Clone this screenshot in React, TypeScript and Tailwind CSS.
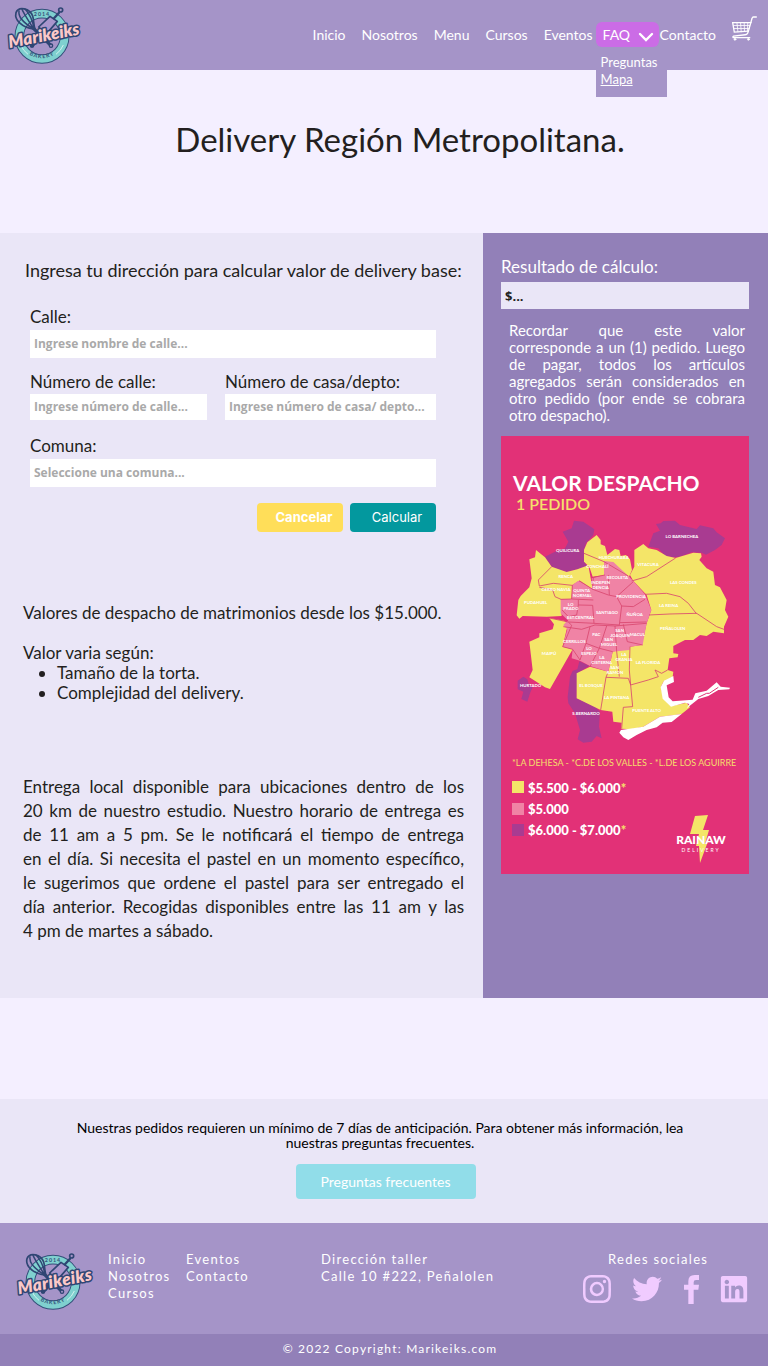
import React from "react";
import { BsInstagram } from "react-icons/bs";
import { FaLinkedin, FaTwitter } from "react-icons/fa";

function Logo() {
  return (
    <svg viewBox="12 12 240 180" className="h-[60px] w-20 shrink-0" role="img" aria-label="Marikeiks Bakery">
      <circle cx="126" cy="106" r="68" fill="none" stroke="#34507a" strokeWidth="29" />
      <circle cx="126" cy="106" r="68" fill="none" stroke="#7fd0cf" strokeWidth="23" />
      <path d="M62 132 A69 69 0 0 0 84 160 M190 132 A69 69 0 0 1 168 160" fill="none" stroke="#e6f8f5" strokeWidth="2.5" />
      <text x="126" y="44" textAnchor="middle" fontFamily="Lato" fontSize="16" fontWeight="700" letterSpacing="3" fill="#34507a">2014</text>
      <path id="logo-bottom" d="M72 148 A74 74 0 0 0 180 148" fill="none" />
      <text fontFamily="Lato" fontSize="16" fontWeight="700" letterSpacing="3" fill="#34507a" textAnchor="middle">
        <textPath href="#logo-bottom" startOffset="50%">BAKERY</textPath>
      </text>
      <g stroke="#2f4674" fill="none" strokeLinecap="round" strokeLinejoin="round">
        <path d="M98 80 L153 134" strokeWidth="10" />
        <path d="M100 84 C68 80 42 58 48 35 C56 14 90 22 98 45 C102 58 100 70 105 84" strokeWidth="5" />
        <path d="M98 82 C75 68 54 48 57 30 M100 82 C86 60 71 38 66 25 M102 82 C98 60 88 38 76 25" strokeWidth="4.5" />
        <path d="M96 134 L135 90" strokeWidth="11" />
        <path d="M133 95 L116 78 L150 46 L172 61 L140 98Z" fill="#a996cd" strokeWidth="5" />
        <path d="M162 52 L177 35" strokeWidth="7" />
        <circle cx="182" cy="27" r="6" strokeWidth="5" />
        <circle cx="153" cy="134" r="5" fill="#a493c8" strokeWidth="4" />
        <circle cx="96" cy="134" r="4" strokeWidth="5" />
      </g>
      <text x="131" y="121" transform="rotate(-11 130 102)" textAnchor="middle" fontFamily="Lato" fontSize="51" fontWeight="800" fontStyle="italic" fill="#fbc8c8" stroke="#2f4674" strokeWidth="9" strokeLinejoin="round" paintOrder="stroke">Marikeiks</text>
    </svg>
  );
}

function Cart() {
  return (
    <svg viewBox="0 0 76 76" className="h-[25px] w-[25px]" fill="none" stroke="#fff" strokeWidth="4" strokeLinecap="round">
      <path d="M74 3 H65 Q62 3 61 7 L49 49 Q47 57 40 57 L5 61 Q1 63 4 66 H54" />
      <path d="M58 20 H2 L7 49 L49 46" />
      <path d="M5 29 H54 M6 38 H52 M15 20 L18 48 M26 20 L28 48 M37 20 L38 47 M48 20 L47 46" strokeWidth="2.5" />
      <circle cx="9" cy="71" r="3" fill="#fff" strokeWidth="2" />
      <circle cx="50" cy="71" r="3" fill="#fff" strokeWidth="2" />
    </svg>
  );
}

const purpleAreas = [
  "M222 62 L250 65 L283 88 L280 105 L258 130 L252 150 L256 190 L262 200 L232 208 L200 216 L180 210 L155 200 L135 170 L165 155 L195 145 L205 125 L188 95 L215 85Z",
  "M468 72 L482 70 L490 63 L525 62 L540 75 L590 87 L600 76 L640 85 L650 97 L675 115 L665 135 L645 150 L618 164 L605 158 L575 157 L540 170 L520 172 L495 167 L475 145 L445 140 L460 100 L480 92Z",
  "M238 484 L268 497 L232 520 L230 595 L285 620 L300 635 L297 680 L305 715 L290 708 L275 725 L250 728 L233 718 L240 690 L225 640 L205 610 L203 590 L210 530 L218 512 L232 508Z",
  "M53 542 L70 530 L82 538 L86 552 L98 562 L90 580 L82 605 L64 597 L70 575 L53 568Z",
];

const yellowAreas = [
  "M108 150 L135 172 L155 200 L200 216 L232 208 L265 196 L278 268 L238 242 L217 255 L215 297 L183 298 L185 348 L140 350 L68 348 L58 356 L50 346 L55 300 L62 288 L88 262 L95 235 L88 178 L105 172Z",
  "M290 105 L302 120 L302 133 L315 138 L322 165 L345 147 L358 150 L362 168 L378 165 L390 178 L396 210 L385 235 L330 190 L315 225 L278 230 L268 200 L252 185 L252 150 L262 127Z",
  "M148 354 L192 362 L215 376 L212 388 L200 388 L188 440 L218 448 L150 567 L135 562 L88 532 L98 510 L88 425 L118 412 L118 400 L158 388 L162 373Z",
  "M430 132 L445 145 L470 150 L500 168 L527 174 L580 158 L603 160 L605 170 L598 180 L620 205 L640 215 L645 255 L660 262 L680 300 L675 330 L685 350 L672 380 L672 400 L640 395 L620 408 L600 405 L580 420 L555 420 L520 438 L520 460 L535 462 L533 472 L508 475 L503 510 L520 515 L518 530 L490 545 L483 560 L490 595 L515 618 L560 608 L570 622 L545 642 L525 645 L480 650 L430 680 L395 688 L363 686 L365 668 L340 665 L337 635 L302 630 L230 595 L230 520 L270 500 L325 515 L338 455 L390 440 L425 435 L440 370 L454 330 L440 285 L400 243 L390 225 L403 200 L403 150Z",
];

const borders =
  "M155 200 L115 240 L118 258 L160 250 L216 256 M118 262 L158 270 L165 290 L183 298 M252 160 L312 185 L385 228 M395 243 L440 230 L527 174 M435 283 L500 280 L540 290 L565 310 L590 342 M447 345 L510 342 L590 340 L650 380 L672 388 M238 242 L278 268 L280 232 L315 225 M278 268 L325 285 L350 290 L400 245 M182 298 L215 297 L217 255 M215 297 L280 300 M235 300 L235 315 L278 316 L282 370 L205 366 M325 225 L328 285 M350 290 L365 318 L358 375 L282 370 M365 318 L400 320 L435 298 M360 368 L440 366 M186 330 L205 350 L230 345 L235 315 M190 380 L245 388 L285 375 L345 378 L440 370 M270 380 L258 430 L240 480 M320 378 L298 445 L258 430 M345 378 L350 453 M370 373 L382 425 L428 435 M350 453 L358 530 M298 445 L338 455 M270 500 L298 445 M390 440 L388 510 L392 555 L445 540 L475 530 L465 510 L485 520 L503 510 M325 515 L318 532 L385 535 L392 555 L398 620 L370 622 L365 686 M318 532 L302 630 M148 354 L205 366 L215 376 L188 440 L218 448 L240 480";

const mapLabels: [string, number, number][] = [
  ["QUILICURA", 203, 157], ["LO BARNECHEA", 546, 115], ["HUECHURABA", 341, 176], ["VITACURA", 444, 198],
  ["CONCHALÍ", 292, 203], ["RENCA", 197, 234], ["RECOLETA", 352, 238], ["INDEPEN", 302, 252], ["DENCIA", 302, 267],
  ["CERRO NAVIA", 168, 273], ["QUINTA", 245, 275], ["NORMAL", 247, 290], ["LAS CONDES", 550, 253],
  ["PROVIDENCIA", 393, 293], ["PUDAHUEL", 107, 313], ["LO", 212, 317], ["PRADO", 213, 331], ["SANTIAGO", 321, 342],
  ["ÑUÑOA", 404, 348], ["LA REINA", 506, 321], ["EST.CENTRAL", 242, 357], ["PEÑALOLEN", 518, 390],
  ["PAC", 289, 408], ["SAN", 359, 396], ["JOAQUIN", 360, 410], ["MACUL", 412, 408], ["CERRILLOS", 223, 428],
  ["SAN", 326, 424], ["MIGUEL", 327, 438], ["LO", 267, 450], ["ESPEJO", 267, 464], ["MAIPÚ", 147, 466],
  ["LA", 306, 476], ["CISTERNA", 305, 491], ["LA", 372, 468], ["GRANJA", 372, 482], ["LA FLORIDA", 444, 491],
  ["SAN", 344, 506], ["RAMON", 345, 521], ["EL BOSQUE", 273, 561], ["HURTADO", 92, 561], ["LA PINTANA", 350, 598],
  ["PUENTE ALTO", 440, 635], ["S.BERNARDO", 258, 644],
];

function DeliveryPoster() {
  return (
    <svg viewBox="0 0 248 438" className="mt-3 block w-full" fontFamily="Lato, sans-serif" role="img" aria-label="Valor despacho por comuna">
      <rect width="248" height="438" fill="#e23177" />
      <text x="12" y="55" fontSize="21" fontWeight="700" fill="#fff">VALOR DESPACHO</text>
      <text x="15" y="74" fontSize="16" fontWeight="600" fill="#f5df6b">1 PEDIDO</text>
      <g transform="translate(-1 64) scale(0.3333)">
        {purpleAreas.map((d) => <path key={d} d={d} fill="#a93b91" />)}
        {yellowAreas.map((d) => <path key={d} d={d} fill="#f4e568" />)}
        <path
          d="M312 183 L340 186 L385 228 L400 243 L435 283 L454 330 L440 370 L428 435 L390 440 L388 450 L338 455 L325 515 L270 498 L240 482 L215 475 L218 448 L188 440 L202 388 L190 376 L198 366 L205 362 L182 340 L182 298 L215 297 L217 255 L235 242 L278 268 L275 235 L312 225Z"
          fill="#f083a5"
        />
        <path
          d="M520 528 L522 546 L500 556 L506 592 L518 604 L578 599 L586 580 L620 572 L650 547 L662 560 L690 563 L688 568 L655 570 L625 588 L595 597 L560 625 L568 612 L555 608 L513 620 L488 596 L482 562 L492 542Z M363 690 L430 680 L480 650 L545 642 L515 666 L488 668 L470 682 L440 690 L410 705 L385 720 L370 712 L358 698Z"
          fill="#fff"
        />
        <path d={borders} fill="none" stroke="#d9476f" strokeWidth="2.5" strokeLinejoin="round" />
        <path d="M595 592 L620 580 L628 580 L655 562" fill="none" stroke="#e23177" strokeWidth="3" />
        <g fontSize="13" fontWeight="700" fill="#fff" textAnchor="middle">
          {mapLabels.map(([name, x, y]) => <text key={name + x} x={x} y={y}>{name}</text>)}
        </g>
      </g>
      <text x="11" y="330" fontSize="9" fill="#f5df6b">*LA DEHESA - *C.DE LOS VALLES - *L.DE LOS AGUIRRE</text>
      <rect x="11" y="345" width="12" height="12" fill="#f4e568" />
      <rect x="11" y="367" width="12" height="12" fill="#f083a5" />
      <rect x="11" y="388" width="12" height="12" fill="#a93b91" />
      <g fontSize="13" fontWeight="900" fill="#fff">
        <text x="27" y="357">$5.500 - $6.000<tspan fill="#f5df6b">*</tspan></text>
        <text x="27" y="378">$5.000</text>
        <text x="27" y="399">$6.000 - $7.000<tspan fill="#f5df6b">*</tspan></text>
      </g>
      <path d="M194 380 L207 379 L202 394 H208 L204 408 H206 L199 427 L198 410 H195 L198 398 H189Z" fill="#f4e568" />
      <text x="200" y="408" textAnchor="middle" fontSize="12" fontWeight="900" fill="#fff">RAINAW</text>
      <text x="200" y="416" textAnchor="middle" fontSize="5" letterSpacing="2" fill="#fff">DELIVERY</text>
    </svg>
  );
}

const navLinks = ["Inicio", "Nosotros", "Menu", "Cursos", "Eventos"];
const field =
  "block w-full rounded-none bg-white px-1 font-['Open_Sans',sans-serif] text-xs font-bold text-[#a9a9a9] outline-none placeholder:text-[#a9a9a9] placeholder:opacity-100";

export default function App() {
  return (
    <div className="min-h-screen bg-[#f4efff] font-[Lato,sans-serif] text-[#231f20]">
      <header className="flex h-[70px] items-center bg-[#a594c8] pr-[11px] pb-px pl-1 text-white">
        <a href="#inicio"><Logo /></a>
        <nav className="ml-auto flex items-center text-sm">
          <div className="flex gap-4">
            {navLinks.map((l) => <a key={l} href={"#" + l.toLowerCase()}>{l}</a>)}
          </div>
          <div className="relative ml-[3px]">
            <button className="flex h-[25px] w-[63px] items-center justify-between rounded-md bg-[#cb6ce6] pr-[5px] pl-[7px]">
              FAQ
              <svg viewBox="0 0 16 10" className="mt-1 h-[10px] w-4" fill="none" stroke="#fff" strokeWidth="2.4" strokeLinecap="round">
                <path d="M2 2 L8 8 L14 2" />
              </svg>
            </button>
            <div className="absolute top-[25px] left-0 flex h-[50px] w-[71px] flex-col bg-[#a594c8] pt-[7px] pl-[5px] text-[13px] leading-[17px]">
              <a href="#preguntas">Preguntas</a>
              <a href="#mapa" className="underline">Mapa</a>
            </div>
          </div>
          <a href="#contacto" className="ml-px">Contacto</a>
          <a href="#carrito" aria-label="Carrito" className="mb-3 ml-4"><Cart /></a>
        </nav>
      </header>

      <h1 className="pt-[45px] pb-[70px] pl-8 text-center text-[33px] leading-[48px]">Delivery Región Metropolitana.</h1>

      <main className="grid grid-cols-[483fr_285fr]">
        <section className="bg-[#eae6f7] pt-[25px] pb-[55px] text-[17px] leading-6">
          <h2 className="pl-[25px] text-lg leading-6 whitespace-nowrap">Ingresa tu dirección para calcular valor de delivery base:</h2>
          <form className="mt-[23px] mr-[47px] ml-[30px]" onSubmit={(e) => e.preventDefault()}>
            <label htmlFor="calle" className="block">Calle:</label>
            <input id="calle" className={field + " mt-px h-7 pb-0.5"} placeholder="Ingrese nombre de calle..." />
            <div className="mt-3 grid grid-cols-[177fr_211fr] gap-x-[18px]">
              <div>
                <label htmlFor="numero" className="block">Número de calle:</label>
                <input id="numero" className={field + " h-[26px] pb-0.5"} placeholder="Ingrese número de calle..." />
              </div>
              <div>
                <label htmlFor="depto" className="block">Número de casa/depto:</label>
                <input id="depto" className={field + " h-[26px] pb-0.5"} placeholder="Ingrese número de casa/ depto..." />
              </div>
            </div>
            <label htmlFor="comuna" className="mt-[14px] block">Comuna:</label>
            <select id="comuna" className={field + " mt-px h-7 appearance-none"}>
              <option>Seleccione una comuna...</option>
            </select>
            <div className="mt-4 flex justify-end gap-[7px] font-[Inter,sans-serif] text-[13px] text-white">
              <button type="reset" className="h-[29px] w-[86px] rounded bg-[#ffde59] pb-0.5 pl-2 font-bold">Cancelar</button>
              <button type="submit" className="h-[29px] w-[86px] rounded bg-[#03989e] pb-0.5 pl-2">Calcular</button>
            </div>
          </form>
          <div className="mr-[19px] ml-[23px]">
            <p className="mt-[69px]">Valores de despacho de matrimonios desde los $15.000.</p>
            <div className="mt-[18px] leading-5">
              <p>Valor varia según:</p>
              <ul className="list-disc pl-[34px]">
                <li>Tamaño de la torta.</li>
                <li>Complejidad del delivery.</li>
              </ul>
            </div>
            <p className="mt-[72px] text-justify">
              Entrega local disponible para ubicaciones dentro de los 20&nbsp;km de nuestro estudio. Nuestro horario de entrega es de&nbsp;11&nbsp;am a 5&nbsp;pm. Se le notificará el tiempo de entrega en&nbsp;el&nbsp;día. Si necesita el pastel en un momento específico, le&nbsp;sugerimos que ordene el pastel para ser entregado el día&nbsp;anterior. Recogidas disponibles entre las 11&nbsp;am y las 4&nbsp;pm de martes a sábado.
            </p>
          </div>
        </section>
        <section className="bg-[#9280b8] pt-[22px] pr-[19px] pl-[18px] text-white">
          <label htmlFor="resultado" className="block text-[17px] leading-6">Resultado de cálculo:</label>
          <input id="resultado" readOnly value="$..." className="mt-[3px] block h-[27px] w-full bg-[#eae6f7] px-1 font-['Open_Sans',sans-serif] text-[13px] font-bold text-[#231f20] outline-none" />
          <p className="mt-[13px] mr-1 ml-2 text-justify text-[15px] leading-[17px]">
            Recordar que este valor corresponde a un (1) pedido. Luego de pagar, todos los artículos agregados serán considerados en otro pedido (por ende se cobrara otro despacho).
          </p>
          <DeliveryPoster />
        </section>
      </main>

      <section className="mt-[101px] flex flex-col items-center bg-[#eae6f7] pt-[21px] pb-6 text-center text-black">
        <p className="mr-2 w-[610px] max-w-full text-sm leading-[15px]">
          Nuestras pedidos requieren un mínimo de 7 días de anticipación. Para obtener más información, lea nuestras preguntas frecuentes.
        </p>
        <button className="mt-[14px] ml-[3px] h-[35px] w-[180px] rounded bg-[#91dde9] text-sm text-white">Preguntas frecuentes</button>
      </section>

      <footer className="bg-[#a594c8] text-white">
        <div className="flex h-[111px] items-start pt-7 pr-5 pl-[15px] text-[13px] leading-[17px] tracking-widest">
          <Logo />
          <div className="ml-[13px] flex w-[78px] flex-col">
            <a href="#inicio">Inicio</a>
            <a href="#nosotros">Nosotros</a>
            <a href="#cursos">Cursos</a>
          </div>
          <div className="flex w-[135px] flex-col">
            <a href="#eventos">Eventos</a>
            <a href="#contacto">Contacto</a>
          </div>
          <address className="not-italic">
            Dirección taller<br />Calle 10 #222, Peñalolen
          </address>
          <div className="ml-auto w-[165px]">
            <p className="pl-[25px]">Redes sociales</p>
            <div className="mt-1.5 flex items-center justify-between text-[#f0cbff]">
              <a href="#instagram" aria-label="Instagram"><BsInstagram className="size-[28px]" /></a>
              <a href="#twitter" aria-label="Twitter"><FaTwitter className="size-[30px]" /></a>
              <a href="#facebook" aria-label="Facebook">
                <svg viewBox="375 102 45 87" className="h-[29px] w-[15px]" fill="currentColor">
                  <path d="M388 189 V146 H375 V131 H388 V121 Q388 102 407 102 H420 V117 H411 Q404 117 404 124 V131 H420 L418 146 H404 V189Z" />
                </svg>
              </a>
              <a href="#linkedin" aria-label="LinkedIn"><FaLinkedin className="h-[30px] w-[28px]" /></a>
            </div>
          </div>
        </div>
        <p className="h-8 bg-[#9280b8] pl-3 text-center text-xs leading-[30px] tracking-widest">© 2022 Copyright: Marikeiks.com</p>
      </footer>
    </div>
  );
}
